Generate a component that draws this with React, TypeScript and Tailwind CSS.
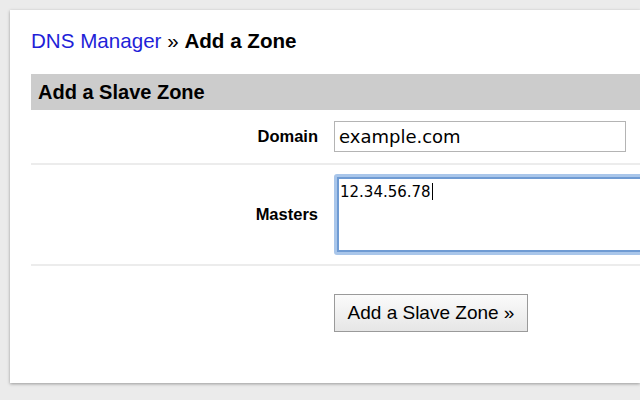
export default function App() {
  return (
    <div className="h-[400px] overflow-hidden bg-[#ebebeb] pt-[10px] pl-[10px] font-['Liberation_Sans',Arial,sans-serif] text-black">
      <div className="h-[373px] bg-white pl-[21px] pt-[21px] shadow-[0_1px_3px_rgba(0,0,0,0.35)]">
        <h1 className="text-[20.6px] leading-[20px]">
          <a className="text-[#1f1fd8]" href="#">
            DNS Manager
          </a>{" "}
          » <span className="font-bold">Add a Zone</span>
        </h1>

        <div className="mt-[23px] flex h-[36px] items-center bg-[#cccccc] pl-[7px]">
          <h2 className="text-[20px] font-bold">Add a Slave Zone</h2>
        </div>

        <div className="flex items-center border-b-2 border-[#ececec] py-[11px]">
          <label className="w-[289px] shrink-0 pr-[2px] text-right text-[16.5px] font-bold">Domain</label>
          <input
            defaultValue="example.com"
            className="ml-[14px] h-[31px] w-[292px] shrink-0 border border-[#b4b4b4] px-[4px] font-['DejaVu_Sans',sans-serif] text-[18px] outline-none"
          />
        </div>

        <div className="flex items-center border-b-2 border-[#ececec] py-[9px]">
          <label className="w-[289px] shrink-0 pr-[2px] text-right text-[16.5px] font-bold">Masters</label>
          <div className="ml-[14px] h-[81px] w-[340px] shrink-0 rounded-[3px] border-[3px] border-[#a9c6ea] p-0">
            <div className="h-full w-full border-2 border-[#6f9bd3] px-[1px] pt-[1px] font-['DejaVu_Sans',sans-serif] text-[15px] leading-[18px]">
              12.34.56.78<span className="ml-px inline-block h-[17px] w-px translate-y-[3px] bg-black" />
            </div>
          </div>
        </div>

        <div className="pt-[28px] pl-[303px]">
          <button className="h-[38px] w-[194px] border border-[#9a9a9a] bg-gradient-to-b from-[#fbfbfb] to-[#e6e6e6] text-[19px]">
            Add a Slave Zone »
          </button>
        </div>
      </div>
    </div>
  );
}
